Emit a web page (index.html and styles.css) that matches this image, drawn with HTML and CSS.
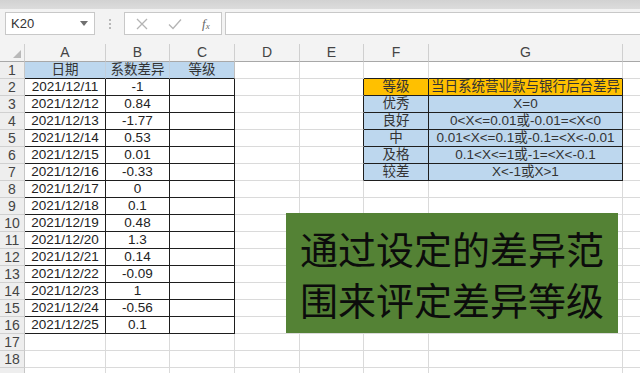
FILE: index.html
```html
<!DOCTYPE html>
<html lang="zh-CN">
<head>
<meta charset="utf-8">
<title>差异等级</title>
<link rel="stylesheet" href="styles.css">
</head>
<body>
<div class="app">
  <div class="topband"></div>
  <div class="fbar">
    <div class="namebox">
      <span class="ref">K20</span>
      <svg class="dd" width="8" height="5" viewBox="0 0 8 5"><path d="M0 0h8L4 5z" fill="#707070"/></svg>
    </div>
    <div class="grip"><i></i><i></i><i></i></div>
    <div class="fbtns">
      <svg class="ic" width="12" height="12" viewBox="0 0 12 12"><path d="M1 1L11 11M11 1L1 11" stroke="#b4b4b4" stroke-width="1.3" fill="none"/></svg>
      <svg class="ic" width="14" height="12" viewBox="0 0 14 12"><path d="M1 6.5L5 10.5L13 1.5" stroke="#b4b4b4" stroke-width="1.3" fill="none"/></svg>
      <span class="fx">f<sub>x</sub></span>
    </div>
    <div class="finput"></div>
  </div>
  <div class="sheet">
    <table class="grid">
      <colgroup>
        <col class="c-rh"><col class="c-a"><col class="c-b"><col class="c-c"><col class="c-d"><col class="c-e"><col class="c-f"><col class="c-g"><col class="c-h">
      </colgroup>
      <tr class="colhead">
        <th class="corner"><svg width="8" height="8" viewBox="0 0 8 8"><path d="M8 0V8H0z" fill="#b9b9b9"/></svg></th>
        <th>A</th><th>B</th><th>C</th><th>D</th><th>E</th><th>F</th><th>G</th><th class="last"></th>
      </tr>
      <tr>
        <th>1</th><td class="blue bb">日期</td><td class="blue bb">系数差异</td><td class="blue bb">等级</td><td></td><td></td><td class="bb"></td><td class="bb"></td><td></td>
      </tr>
      <tr>
        <th>2</th><td class="k">2021/12/11</td><td class="k">-1</td><td class="k"></td><td></td><td class="br"></td><td class="k orange">等级</td><td class="k orange">当日系统营业款与银行后台差异</td><td></td>
      </tr>
      <tr>
        <th>3</th><td class="k">2021/12/12</td><td class="k">0.84</td><td class="k"></td><td></td><td class="br"></td><td class="k blue">优秀</td><td class="k blue">X=0</td><td></td>
      </tr>
      <tr>
        <th>4</th><td class="k">2021/12/13</td><td class="k">-1.77</td><td class="k"></td><td></td><td class="br"></td><td class="k blue">良好</td><td class="k blue">0&lt;X&lt;=0.01或-0.01=&lt;X&lt;0</td><td></td>
      </tr>
      <tr>
        <th>5</th><td class="k">2021/12/14</td><td class="k">0.53</td><td class="k"></td><td></td><td class="br"></td><td class="k blue">中</td><td class="k blue">0.01&lt;X&lt;=0.1或-0.1=&lt;X&lt;-0.01</td><td></td>
      </tr>
      <tr>
        <th>6</th><td class="k">2021/12/15</td><td class="k">0.01</td><td class="k"></td><td></td><td class="br"></td><td class="k blue">及格</td><td class="k blue">0.1&lt;X&lt;=1或-1=&lt;X&lt;-0.1</td><td></td>
      </tr>
      <tr>
        <th>7</th><td class="k">2021/12/16</td><td class="k">-0.33</td><td class="k"></td><td></td><td class="br"></td><td class="k blue">较差</td><td class="k blue">X&lt;-1或X&gt;1</td><td></td>
      </tr>
      <tr>
        <th>8</th><td class="k">2021/12/17</td><td class="k">0</td><td class="k"></td><td></td><td></td><td></td><td></td><td></td>
      </tr>
      <tr>
        <th>9</th><td class="k">2021/12/18</td><td class="k">0.1</td><td class="k"></td><td></td><td></td><td></td><td></td><td></td>
      </tr>
      <tr>
        <th>10</th><td class="k">2021/12/19</td><td class="k">0.48</td><td class="k"></td><td></td><td></td><td></td><td></td><td></td>
      </tr>
      <tr>
        <th>11</th><td class="k">2021/12/20</td><td class="k">1.3</td><td class="k"></td><td></td><td></td><td></td><td></td><td></td>
      </tr>
      <tr>
        <th>12</th><td class="k">2021/12/21</td><td class="k">0.14</td><td class="k"></td><td></td><td></td><td></td><td></td><td></td>
      </tr>
      <tr>
        <th>13</th><td class="k">2021/12/22</td><td class="k">-0.09</td><td class="k"></td><td></td><td></td><td></td><td></td><td></td>
      </tr>
      <tr>
        <th>14</th><td class="k">2021/12/23</td><td class="k">1</td><td class="k"></td><td></td><td></td><td></td><td></td><td></td>
      </tr>
      <tr>
        <th>15</th><td class="k">2021/12/24</td><td class="k">-0.56</td><td class="k"></td><td></td><td></td><td></td><td></td><td></td>
      </tr>
      <tr>
        <th>16</th><td class="k">2021/12/25</td><td class="k">0.1</td><td class="k"></td><td></td><td></td><td></td><td></td><td></td>
      </tr>
      <tr>
        <th>17</th><td></td><td></td><td></td><td></td><td></td><td></td><td></td><td></td>
      </tr>
      <tr>
        <th>18</th><td></td><td></td><td></td><td></td><td></td><td></td><td></td><td></td>
      </tr>
      <tr>
        <th></th><td></td><td></td><td></td><td></td><td></td><td></td><td></td><td></td>
      </tr>
    </table>
    <div class="note">通过设定的差异范<br>围来评定差异等级</div>
  </div>
</div>
</body>
</html>
```

FILE: styles.css
```css
* { box-sizing: border-box; }
html, body { margin: 0; padding: 0; }
body {
  width: 640px;
  height: 373px;
  overflow: hidden;
  background: #ffffff;
  font-family: "Liberation Sans", "Noto Sans CJK SC", sans-serif;
  color: #222;
}
.app { width: 640px; height: 373px; overflow: hidden; background: #f3f3f3; }
.topband { height: 9px; background: linear-gradient(#d2d2d2, #dcdcdc); }
.fbar {
  height: 35px;
  display: flex;
  align-items: flex-start;
  padding: 3px 0 0 5px;
}
.namebox {
  width: 90px;
  height: 23px;
  background: #fff;
  border: 1px solid #c8c8c8;
  display: flex;
  align-items: center;
  justify-content: space-between;
  padding: 0 6px 0 5px;
  font-size: 13px;
  color: #333;
}
.grip {
  width: 29px;
  height: 23px;
  display: flex;
  flex-direction: column;
  align-items: center;
  justify-content: center;
  gap: 2px;
}
.grip i { width: 2px; height: 2px; background: #b8b8b8; display: block; }
.fbtns {
  width: 98px;
  height: 23px;
  background: #fff;
  border: 1px solid #c8c8c8;
  display: flex;
  align-items: center;
  padding: 0 0 0 11px;
  gap: 20px;
}
.fx {
  font-family: "Liberation Serif", serif;
  font-style: italic;
  font-size: 13px;
  color: #666;
  line-height: 1;
}
.fx sub { font-size: 9px; vertical-align: -1px; }
.finput {
  flex: 1;
  margin-left: 3px;
  height: 23px;
  background: #fff;
  border: 1px solid #c8c8c8;
  border-right: none;
}
.sheet { position: relative; background: #fff; }
.grid {
  border-collapse: separate;
  border-spacing: 0;
  table-layout: fixed;
  width: 670px;
  font-size: 13.5px;
}
.c-rh { width: 25px; }
.c-a { width: 81px; }
.c-b { width: 64px; }
.c-c { width: 65px; }
.c-d { width: 65px; }
.c-e { width: 64px; }
.c-f { width: 65px; }
.c-g { width: 194px; }
.c-h { width: 47px; }
.grid td, .grid th {
  height: 17px;
  padding: 0;
  border-right: 1px solid #dadada;
  border-bottom: 1px solid #dadada;
  text-align: center;
  line-height: 16px;
  white-space: nowrap;
  overflow: hidden;
}
.grid th {
  background: #eeeeee;
  font-weight: normal;
  color: #444;
  font-size: 14px;
  border-right-color: #c6c6c6;
  border-bottom-color: #d0d0d0;
}
.grid .colhead th {
  height: 18px;
  border-bottom: 1px solid #a8a8a8;
  border-right-color: #cfcfcf;
  background: #f3f3f3;
  vertical-align: bottom;
  line-height: 17px;
}
.grid .colhead .last { border-right: none; }
.grid .colhead .corner { text-align: right; padding: 0 3px 3px 0; line-height: 0; vertical-align: bottom; }
.grid .corner svg { display: inline-block; }
.grid td.k { border-right-color: #1e1e1e; border-bottom-color: #1e1e1e; }
.grid td.bb { border-bottom-color: #1e1e1e; }
.grid td.br { border-right-color: #1e1e1e; }
.grid td.blue { background: #bdd7ee; color: #333; }
.grid td.orange { background: #ffc000; color: #333; }
.grid tr:nth-child(2) td.blue { border-right-color: #c3cfdb; }
.grid tr:nth-child(2) td.blue:nth-child(4) { border-right-color: #bfbfbf; }
.note {
  position: absolute;
  left: 286px;
  top: 169px;
  width: 332px;
  height: 120px;
  background: #548235;
  color: #0c0c0c;
  font-family: "Noto Sans CJK SC", sans-serif;
  font-size: 38px;
  line-height: 51px;
  text-align: center;
  padding-top: 9px;
}
```
